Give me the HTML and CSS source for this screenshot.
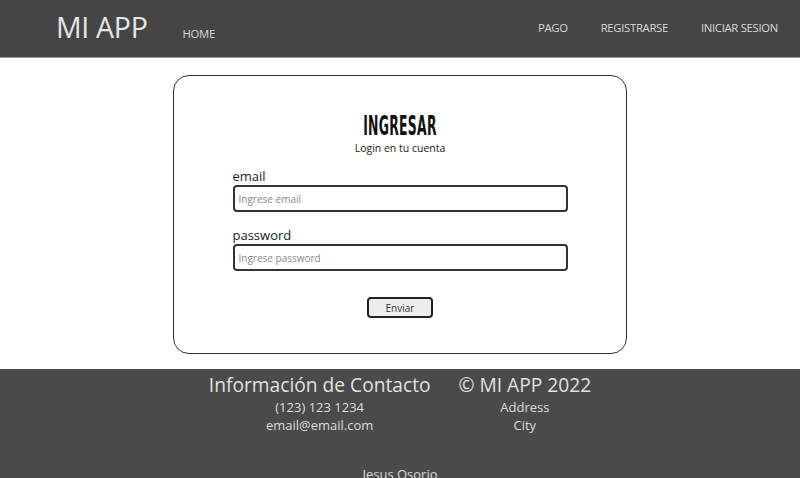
FILE: index.html
```html
<!DOCTYPE html>
<html lang="es">
<head>
<meta charset="utf-8">
<title>MI APP</title>
<link rel="stylesheet" href="styles.css">
</head>
<body>
<header class="topbar">
  <div class="brand">MI APP</div>
  <nav class="nav-left"><a class="nav-link home" href="#">HOME</a></nav>
  <nav class="nav-right">
    <a class="nav-link" href="#">PAGO</a>
    <a class="nav-link" href="#">REGISTRARSE</a>
    <a class="nav-link" href="#">INICIAR SESION</a>
  </nav>
</header>
<main class="main">
  <section class="card">
    <h1 class="title"><span class="title-text">INGRESAR</span></h1>
    <p class="subtitle">Login en tu cuenta</p>
    <form class="form">
      <label class="label">email</label>
      <input class="input" type="text" placeholder="Ingrese email">
      <label class="label label-gap">password</label>
      <input class="input" type="password" placeholder="Ingrese password">
      <div class="actions"><button class="btn" type="button">Enviar</button></div>
    </form>
  </section>
</main>
<footer class="footer">
  <div class="cols">
    <div class="col">
      <div class="col-title">Información de Contacto</div>
      <div class="col-line">(123) 123 1234</div>
      <div class="col-line">email@email.com</div>
    </div>
    <div class="col">
      <div class="col-title">© MI APP 2022</div>
      <div class="col-line">Address</div>
      <div class="col-line">City</div>
    </div>
  </div>
  <div class="author">Jesus Osorio</div>
</footer>
</body>
</html>
```
FILE: styles.css
```css
* { box-sizing: border-box; }
html, body { margin: 0; padding: 0; }
body {
  font-family: "Open Sans", "Liberation Sans", sans-serif;
  background: #ffffff;
  color: #222;
  width: 800px;
  height: 478px;
  overflow: hidden;
}
.topbar {
  height: 58px;
  background: #454545;
  border-bottom: 1px solid #9a9a9a;
  display: flex;
  align-items: flex-start;
  padding-left: 56px;
}
.brand {
  color: #e6e6e6;
  font-size: 28.5px;
  line-height: 1;
  margin-top: 13px;
  letter-spacing: -0.3px;
}
.nav-left { margin-left: 35px; margin-top: 21px; }
.nav-right {
  margin-left: auto;
  margin-top: 20px;
  display: flex;
  gap: 33px;
  padding-right: 22px;
}
.nav-link {
  color: #d8d8d8;
  font-size: 11.3px;
  text-decoration: none;
  letter-spacing: -0.3px;
}
.main {
  height: 311px;
  padding-top: 17px;
  display: flex;
  justify-content: center;
}
.card {
  width: 454px;
  height: 279px;
  border: 1.5px solid #333;
  border-radius: 16px;
  padding-top: 35px;
  display: flex;
  flex-direction: column;
  align-items: center;
}
.title {
  margin: 0;
  font-family: "DejaVu Sans", "Liberation Sans", sans-serif;
  font-weight: 700;
  font-size: 27px;
  line-height: 29px;
  color: #111;
  height: 29px;
  display: flex;
  justify-content: center;
  width: 100%;
}
.title-text {
  display: inline-block;
  transform: scaleX(0.46);
  transform-origin: center;
  letter-spacing: 0.6px;
}
.subtitle {
  margin: 1px 0 0;
  font-size: 10.5px;
  color: #222;
}
.form {
  width: 335px;
  margin-top: 12px;
  display: flex;
  flex-direction: column;
}
.label {
  font-size: 13px;
  line-height: 18px;
  color: #222;
}
.label-gap { margin-top: 14px; }
.input {
  height: 27px;
  border: 2px solid #333;
  border-radius: 4px;
  padding: 0 4px;
  font-family: "Open Sans", "Liberation Sans", sans-serif;
  font-size: 10px;
  background: #fff;
}
.input::placeholder { color: #888; }
.actions {
  display: flex;
  justify-content: center;
  margin-top: 26px;
}
.btn {
  width: 66px;
  height: 21px;
  border: 2px solid #222;
  border-radius: 4px;
  background: #eeeeee;
  font-family: "Open Sans", "Liberation Sans", sans-serif;
  font-size: 10px;
  color: #333;
  padding: 0;
}
.footer {
  height: 109px;
  background: #4a4a4a;
  color: #dcdcdc;
  padding-top: 3px;
}
.cols {
  display: flex;
  justify-content: center;
  gap: 28px;
}
.col {
  display: flex;
  flex-direction: column;
  align-items: center;
}
.col-title {
  font-size: 19.2px;
  line-height: 26px;
  color: #e0e0e0;
}
.col-line {
  font-size: 13px;
  line-height: 18px;
}
.author {
  text-align: center;
  font-size: 13px;
  margin-top: 31px;
}
```
